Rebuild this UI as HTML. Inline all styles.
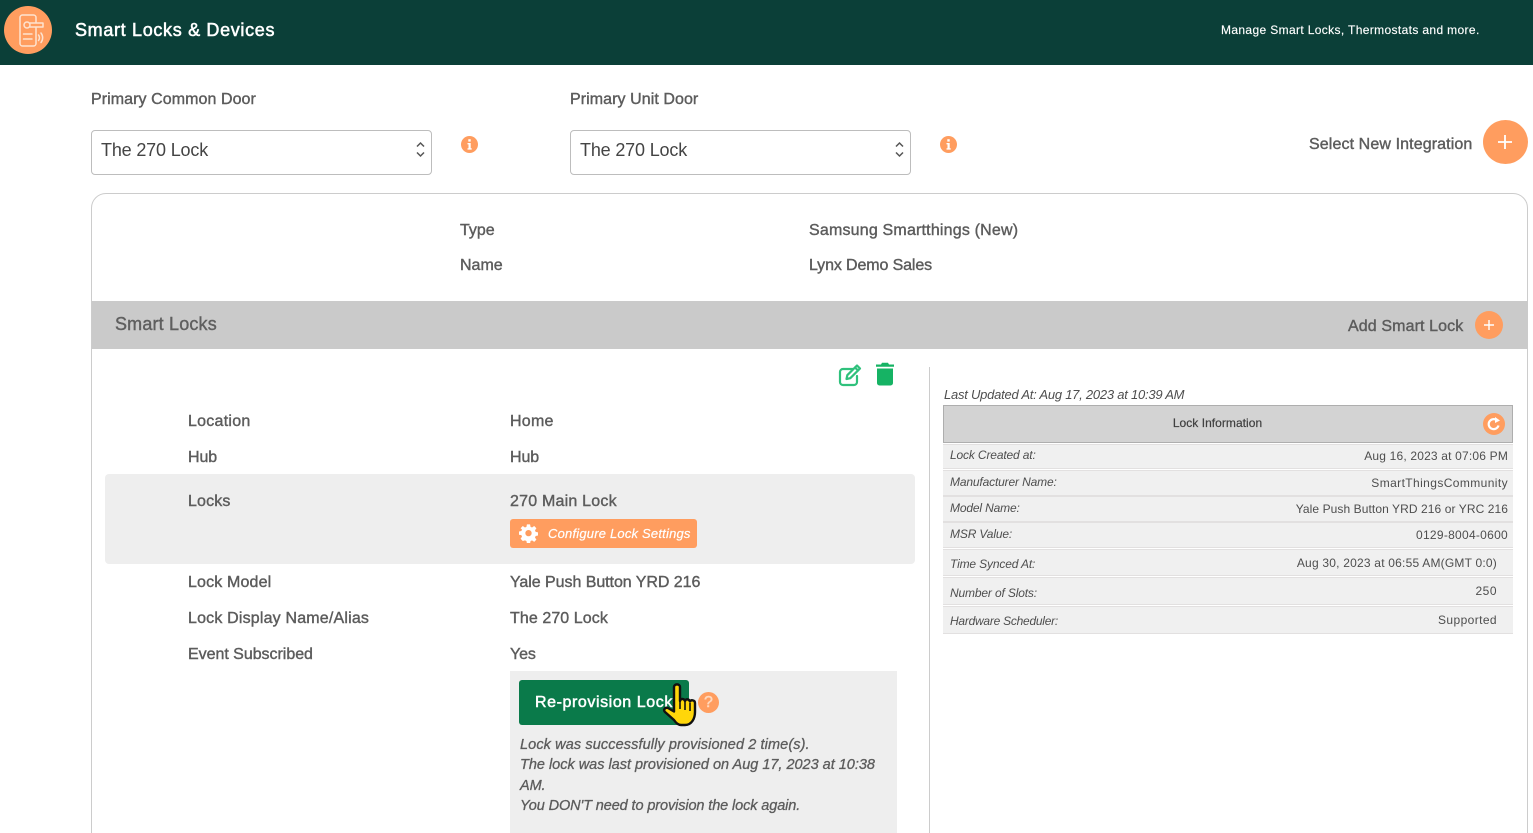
<!DOCTYPE html>
<html lang="en"><head><meta charset="utf-8"><title>Smart Locks &amp; Devices</title>
<style>
html,body{margin:0;padding:0;background:#fff}
#p{position:relative;width:1533px;height:833px;overflow:hidden;font-family:"Liberation Sans",Arial,sans-serif;color:#5c5c5c}
#p div,#p svg{position:absolute}
.t{white-space:nowrap;line-height:20px;font-size:16px;letter-spacing:.1px}
.m{-webkit-text-stroke:.4px currentColor}
.s{font-size:12px;line-height:16px;letter-spacing:.2px;color:#4e4e4e;white-space:nowrap}
.i{font-style:italic}
.s.i{letter-spacing:-.15px}
.l{font-size:14.500px;-webkit-text-stroke:.3px currentColor}
.row{left:943px;width:570px;background:#f0f0f0;border-top:1px solid #e2e0e0;border-bottom:1px solid #e2e0e0;box-sizing:border-box}
.sel{width:341px;height:45px;top:130px;border:1px solid #bdbdbd;border-radius:4px;box-sizing:border-box;background:#fff}
</style></head><body><div id="p">

<div style="left:0;top:0;width:1533px;height:65px;background:#0b3f38"></div>
<div style="left:4px;top:6px;width:48px;height:48px;border-radius:50%;background:#ff9d5f"></div>
<svg style="left:4px;top:6px" width="48" height="48" viewBox="0 0 48 48" fill="none" stroke="#fde3d0" stroke-width="1.5" stroke-linecap="round" stroke-linejoin="round">
<rect x="16" y="9" width="16" height="31" rx="2.500"/>
<path d="M26 17h13v4H26" fill="#ff9d5f"/>
<circle cx="23" cy="19" r="3" fill="#ff9d5f"/>
<path d="M19.500 28h8.500M19.500 33h8.500"/>
<path d="M34.500 29c1.300 1.600 1.300 4 0 5.500M37 27c2.200 2.800 2.200 6.700 0 9.500"/>
</svg>
<div class="t" style="left:75px;top:20px;font-size:18px;color:#fff;letter-spacing:.67px;-webkit-text-stroke:.55px #fff">Smart Locks &amp; Devices</div>
<div class="t" style="left:1221px;top:20px;font-size:12px;color:#fff;letter-spacing:.36px;-webkit-text-stroke:.15px #fff">Manage Smart Locks, Thermostats and more.</div>

<div class="t m" style="left:91px;top:90px;letter-spacing:.07px">Primary Common Door</div>
<div class="t m" style="left:570px;top:90px;letter-spacing:.07px">Primary Unit Door</div>

<div class="sel" style="left:91px"></div>
<div class="t" style="left:101px;top:140px;font-size:18px;color:#444;letter-spacing:-.17px">The 270 Lock</div>
<svg style="left:415px;top:140px" width="11" height="19" viewBox="0 0 11 19" fill="none" stroke="#555" stroke-width="1.5"><path d="M2 6.500 5.500 3 9 6.500M2 12.500 5.500 16 9 12.500"/></svg>
<div class="sel" style="left:570px"></div>
<div class="t" style="left:580px;top:140px;font-size:18px;color:#444;letter-spacing:-.17px">The 270 Lock</div>
<svg style="left:894px;top:140px" width="11" height="19" viewBox="0 0 11 19" fill="none" stroke="#555" stroke-width="1.5"><path d="M2 6.500 5.500 3 9 6.500M2 12.500 5.500 16 9 12.500"/></svg>

<svg style="left:461px;top:136px" width="17" height="17" viewBox="0 0 17 17"><circle cx="8.500" cy="8.500" r="8.500" fill="#ff9d5f"/><rect x="7.300" y="3.200" width="2.400" height="2.400" fill="#fff"/><path d="M6.500 7h3.200v5.200h1v1.400H6.500v-1.400h1V8.400h-1z" fill="#fff"/></svg>
<svg style="left:940px;top:136px" width="17" height="17" viewBox="0 0 17 17"><circle cx="8.500" cy="8.500" r="8.500" fill="#ff9d5f"/><rect x="7.300" y="3.200" width="2.400" height="2.400" fill="#fff"/><path d="M6.500 7h3.200v5.200h1v1.400H6.500v-1.400h1V8.400h-1z" fill="#fff"/></svg>

<div class="t m" style="left:1309px;top:135px;letter-spacing:.11px">Select New Integration</div>
<div style="left:1483px;top:120px;width:45px;height:44px;border-radius:50%;background:#ff9d5f"></div>
<svg style="left:1497px;top:134px" width="16" height="16" viewBox="0 0 16 16" stroke="#fff" stroke-width="1.800"><path d="M8 1v14M1 8h14"/></svg>

<div style="left:91px;top:193px;width:1437px;height:660px;border:1px solid #ccc;border-radius:15px;box-sizing:border-box;background:#fff"></div>

<div class="t m" style="left:460px;top:221px;letter-spacing:0">Type</div>
<div class="t m" style="left:809px;top:221px;letter-spacing:.19px">Samsung Smartthings (New)</div>
<div class="t m" style="left:460px;top:256px;letter-spacing:0">Name</div>
<div class="t m" style="left:809px;top:256px;letter-spacing:-.12px">Lynx Demo Sales</div>

<div style="left:92px;top:301px;width:1436px;height:48px;background:#cacaca"></div>
<div class="t m" style="left:115px;top:314px;font-size:18px;letter-spacing:.17px;color:#5f5f5f">Smart Locks</div>
<div class="t m" style="left:1348px;top:317px;letter-spacing:.11px">Add Smart Lock</div>
<div style="left:1475px;top:311px;width:28px;height:28px;border-radius:50%;background:#ff9d5f"></div>
<svg style="left:1483px;top:319px" width="12" height="12" viewBox="0 0 12 12" stroke="#fff" stroke-width="1.400"><path d="M6 1v10M1 6h10"/></svg>

<svg style="left:838px;top:363px" width="24" height="24" viewBox="0 0 24 24" fill="none" stroke="#2fc17c" stroke-width="2.200" stroke-linejoin="round" stroke-linecap="round"><path d="M15 6H5a3 3 0 0 0-3 3v10a3 3 0 0 0 3 3h11a3 3 0 0 0 3-3v-6"/><path d="M8.500 16l.8-3.800L19 2.500l3 3-9.700 9.700z" fill="#fff"/><path d="M17 4.500l3 3"/></svg>
<svg style="left:875px;top:362px" width="20" height="24" viewBox="0 0 20 24" fill="#16b364"><path d="M7 .8h6l1 1.700h5v2.300H1V2.500h5zM2 6.500h16V21a2.500 2.500 0 0 1-2.500 2.500h-11A2.500 2.500 0 0 1 2 21z"/></svg>

<div style="left:105px;top:474px;width:810px;height:90px;background:#eee;border-radius:4px"></div>

<div class="t m" style="left:188px;top:412px;letter-spacing:.25px">Location</div>
<div class="t m" style="left:510px;top:412px;letter-spacing:.25px">Home</div>
<div class="t m" style="left:188px;top:448px;letter-spacing:-.1px">Hub</div>
<div class="t m" style="left:510px;top:448px;letter-spacing:-.1px">Hub</div>
<div class="t m" style="left:188px;top:492px;letter-spacing:.15px">Locks</div>
<div class="t m" style="left:510px;top:492px;letter-spacing:.21px">270 Main Lock</div>

<div style="left:510px;top:519px;width:187px;height:29px;background:#ff9d5f;border-radius:3px"></div>
<svg style="left:519px;top:524px" width="19" height="19" viewBox="0 0 24 24" fill="#fff"><path fill-rule="evenodd" d="M10 1h4l.6 3.100 1.900.8L19.200 3 22 5.800l-1.800 2.700.8 1.900 3 .6v4l-3 .6-.8 1.900 1.800 2.700-2.800 2.800-2.700-1.800-1.900.8-.6 3h-4l-.6-3-1.900-.8L4.800 22 2 19.200l1.800-2.700-.8-1.900-3-.6v-4l3-.6.8-1.900L2 5.800 4.800 3l2.700 1.900 1.900-.8zM12 8a4 4 0 1 0 0 8 4 4 0 0 0 0-8z" transform="translate(0 -.5)"/></svg>
<div class="t i" style="left:548px;top:524px;font-size:13px;color:#fff;letter-spacing:.2px;-webkit-text-stroke:.2px #fff">Configure Lock Settings</div>

<div class="t m" style="left:188px;top:573px;letter-spacing:.15px">Lock Model</div>
<div class="t m" style="left:510px;top:573px;letter-spacing:-.05px">Yale Push Button YRD 216</div>
<div class="t m" style="left:188px;top:609px;letter-spacing:.18px">Lock Display Name/Alias</div>
<div class="t m" style="left:510px;top:609px;letter-spacing:.08px">The 270 Lock</div>
<div class="t m" style="left:188px;top:645px;letter-spacing:-.03px">Event Subscribed</div>
<div class="t m" style="left:510px;top:645px;letter-spacing:-.1px">Yes</div>

<div style="left:510px;top:671px;width:387px;height:162px;background:#eee"></div>
<div style="left:519px;top:680px;width:170px;height:45px;background:#0a7a4a;border-radius:3px"></div>
<div class="t" style="left:535px;top:693px;color:#fff;letter-spacing:.58px;-webkit-text-stroke:.5px #fff">Re-provision Lock</div>
<div style="left:698px;top:692px;width:21px;height:21px;border-radius:50%;background:#ff9d5f"></div>
<div class="t" style="left:698px;top:693px;width:21px;text-align:center;font-size:16px;color:#ffd9bf;letter-spacing:0;-webkit-text-stroke:.5px #ffd9bf">?</div>
<svg style="left:662px;top:682px" width="36" height="46" viewBox="0 0 36 46"><path d="M12 5c0-3.500 6-3.500 6 0v14c1-3 4-2.500 5 0 1-2.500 4-2 5 .5 1-2 5-1.500 5 1.500v9c0 6-3 13-10 13h-4c-3 0-5-2-7-5l-9-8c-2-2 0-5 3-4l6 3.500z" fill="#ffd60a" stroke="#111" stroke-width="2.400" stroke-linejoin="round"/><path d="M18 19v8M23 20v8M28 21v8" stroke="#111" stroke-width="1.600" fill="none"/></svg>

<div class="t i l" style="left:520px;top:735px;letter-spacing:.1px">Lock was successfully provisioned 2 time(s).</div>
<div class="t i l" style="left:520px;top:755px;letter-spacing:-.015px">The lock was last provisioned on Aug 17, 2023 at 10:38</div>
<div class="t i l" style="left:520px;top:776px;letter-spacing:-.1px">AM.</div>
<div class="t i l" style="left:520px;top:796px;letter-spacing:-.11px">You DON'T need to provision the lock again.</div>

<div style="left:929px;top:367px;width:1px;height:466px;background:#ccc"></div>

<div class="s i" style="left:944px;top:387px;font-size:13px;letter-spacing:-.24px">Last Updated At: Aug 17, 2023 at 10:39 AM</div>
<div style="left:943px;top:405px;width:570px;height:38px;background:#d3d3d3;border:1px solid #aeaeae;box-sizing:border-box"></div>
<div class="s" style="left:943px;top:415px;width:549px;text-align:center;letter-spacing:.04px;-webkit-text-stroke:.2px currentColor;color:#3f3f3f">Lock Information</div>
<div style="left:1483px;top:413px;width:22px;height:22px;border-radius:50%;background:#ff9d5f"></div>
<svg style="left:1487px;top:417px" width="14" height="14" viewBox="0 0 14 14" fill="none" stroke="#fff" stroke-width="2.200"><path d="M11.500 8.500A5 5 0 1 1 9.500 3"/><path d="M8 0l5 3.500-5 2.500z" fill="#fff" stroke="none"/></svg>

<div class="row" style="top:444px;height:25px"></div>
<div class="s i" style="left:950px;top:447px">Lock Created at:</div>
<div class="s" style="right:25px;top:448px;letter-spacing:.18px">Aug 16, 2023 at 07:06 PM</div>
<div class="row" style="top:470px;height:26px"></div>
<div class="s i" style="left:950px;top:474px">Manufacturer Name:</div>
<div class="s" style="right:25px;top:475px;letter-spacing:.4px">SmartThingsCommunity</div>
<div class="row" style="top:496px;height:26px"></div>
<div class="s i" style="left:950px;top:500px">Model Name:</div>
<div class="s" style="right:25px;top:501px;letter-spacing:.08px">Yale Push Button YRD 216 or YRC 216</div>
<div class="row" style="top:522px;height:26px"></div>
<div class="s i" style="left:950px;top:526px">MSR Value:</div>
<div class="s" style="right:25px;top:527px;letter-spacing:.28px">0129-8004-0600</div>
<div class="row" style="top:549px;height:27px"></div>
<div class="s i" style="left:950px;top:556px">Time Synced At:</div>
<div class="s" style="right:36px;top:555px;letter-spacing:.21px">Aug 30, 2023 at 06:55 AM(GMT 0:0)</div>
<div class="row" style="top:577px;height:28px"></div>
<div class="s i" style="left:950px;top:585px">Number of Slots:</div>
<div class="s" style="right:36px;top:583px;letter-spacing:.5px">250</div>
<div class="row" style="top:606px;height:28px"></div>
<div class="s i" style="left:950px;top:613px;letter-spacing:-.25px">Hardware Scheduler:</div>
<div class="s" style="right:36px;top:612px;letter-spacing:.4px">Supported</div>

</div></body></html>
